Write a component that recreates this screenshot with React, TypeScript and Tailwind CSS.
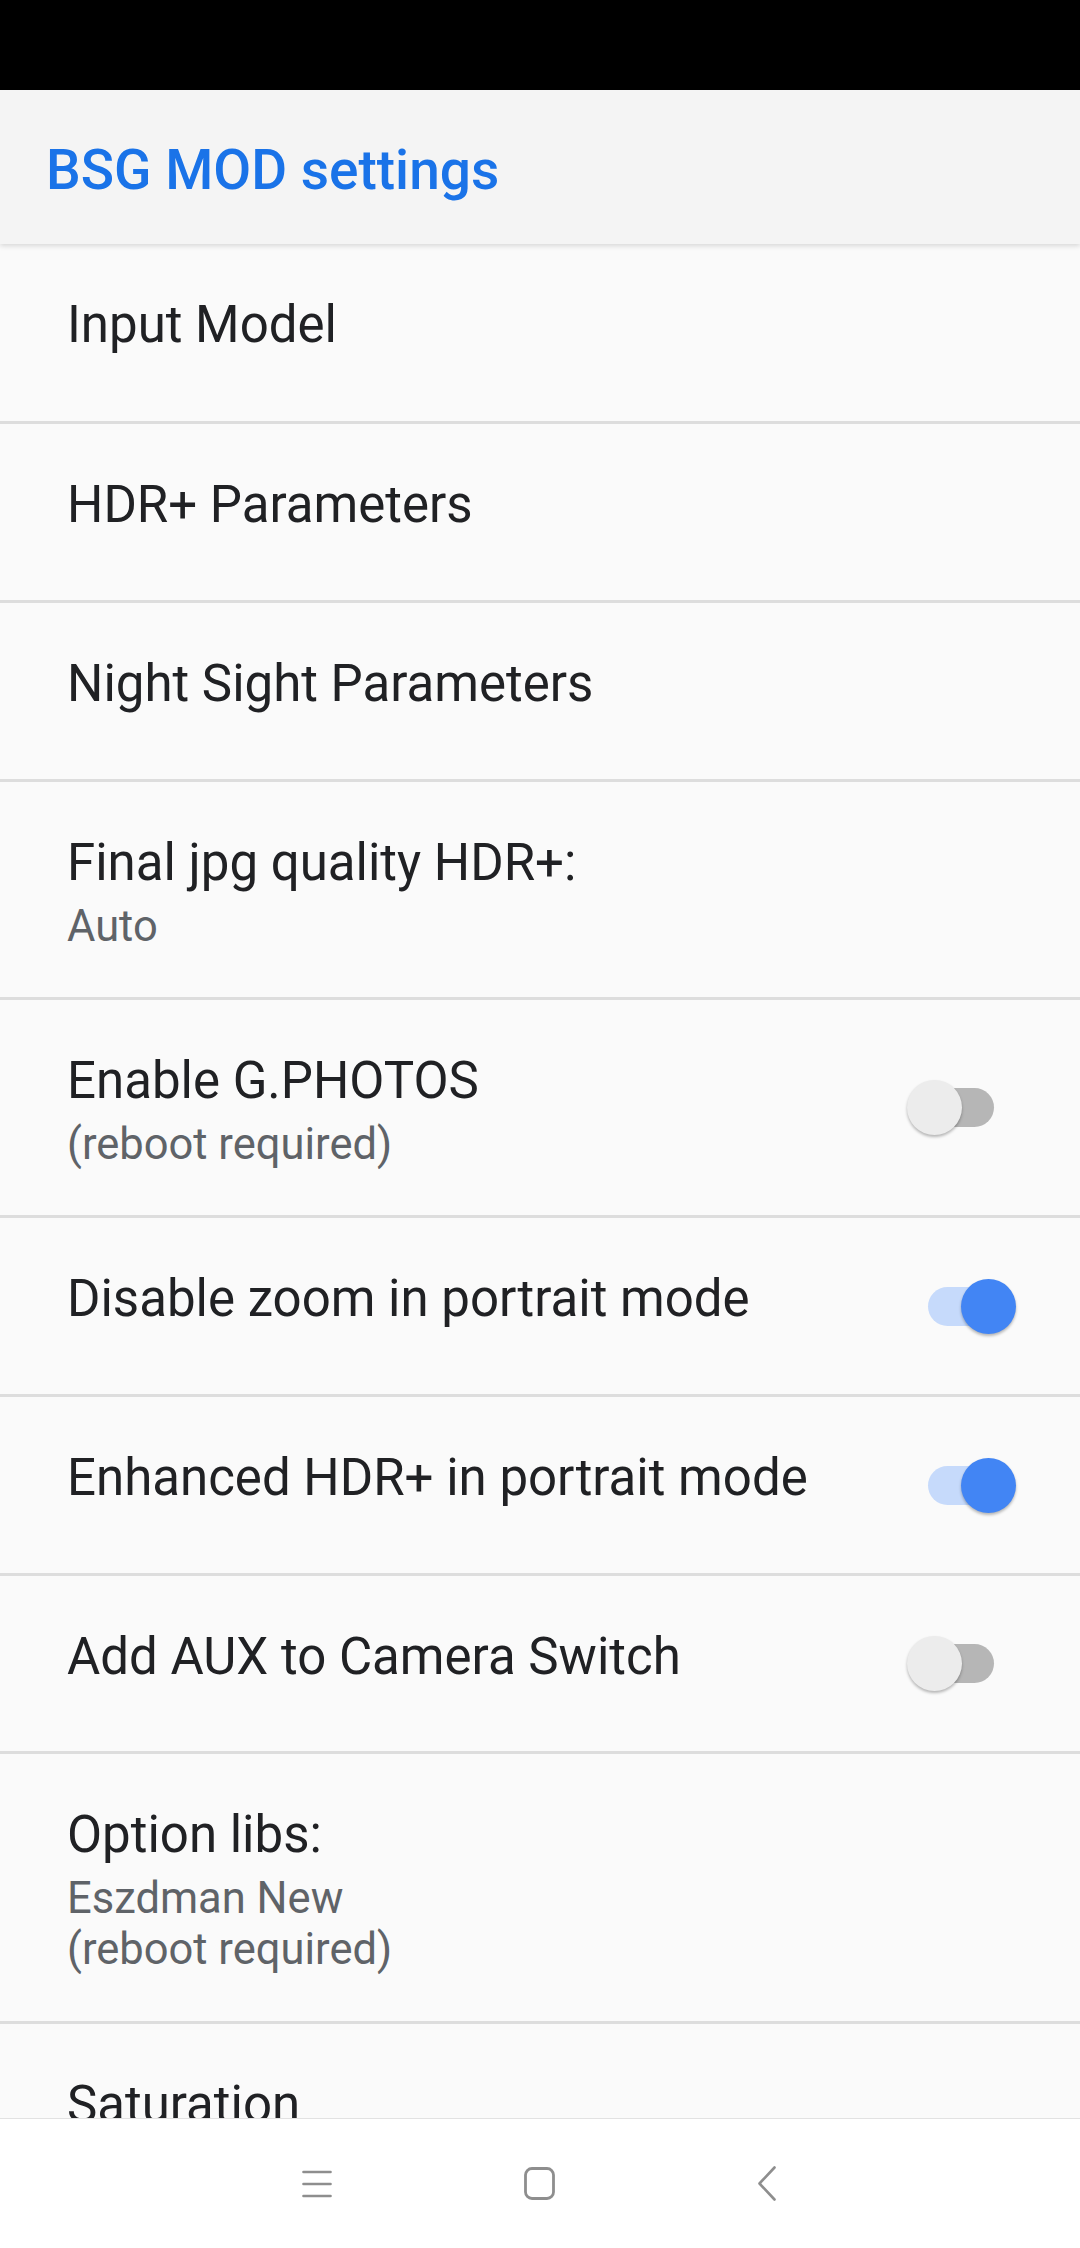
import * as React from "react"

type Row = {
  title: string
  summary?: string[]
  toggle?: boolean
  h: string
}

// heights include the 3px divider at the bottom (border-box)
const rows: Row[] = [
  { title: "Input Model", h: "h-[180px]" },
  { title: "HDR+ Parameters", h: "h-[179px]" },
  { title: "Night Sight Parameters", h: "h-[179px]" },
  { title: "Final jpg quality HDR+:", summary: ["Auto"], h: "h-[218px]" },
  { title: "Enable G.PHOTOS", summary: ["(reboot required)"], toggle: false, h: "h-[218px]" },
  { title: "Disable zoom in portrait mode", toggle: true, h: "h-[179px]" },
  { title: "Enhanced HDR+ in portrait mode", toggle: true, h: "h-[179px]" },
  { title: "Add AUX to Camera Switch", toggle: false, h: "h-[178px]" },
  { title: "Option libs:", summary: ["Eszdman New", "(reboot required)"], h: "h-[270px]" },
  { title: "Saturation", h: "h-[180px]" },
]

function Toggle({ on }: { on: boolean }) {
  return (
    <div className={`relative w-[66px] h-[39px] rounded-full ${on ? "bg-[#c6dafb]" : "bg-[#b6b6b6]"}`}>
      <div
        className={`absolute top-[-8px] w-[55px] h-[55px] rounded-full shadow-[0_2px_3px_rgba(0,0,0,0.28)] ${
          on ? "left-[33px] bg-[#4285f4]" : "left-[-21px] bg-[#ececec]"
        }`}
      />
    </div>
  )
}

function PrefRow({ row, last }: { row: Row; last: boolean }) {
  return (
    <div className={`flex shrink-0 ${row.h} ${last ? "" : "border-b-[3px] border-[#dddddd]"}`}>
      <div className="flex-1 pl-[67px] pt-[51px]">
        <div className="text-[51px] leading-[60px] text-[#202124]">{row.title}</div>
        {row.summary && (
          <div className="mt-[8px]">
            {row.summary.map((s) => (
              <div key={s} className="text-[43.5px] leading-[51px] text-[#5f6368]">
                {s}
              </div>
            ))}
          </div>
        )}
      </div>
      {row.toggle !== undefined && (
        <div className="self-center mr-[86px]">
          <Toggle on={row.toggle} />
        </div>
      )}
    </div>
  )
}

export default function App() {
  return (
    <div
      className="w-[1080px] h-[2248px] flex flex-col overflow-hidden bg-[#fafafa]"
      style={{ fontFamily: "Roboto, 'Noto Sans', sans-serif" }}
    >
      {/* status bar */}
      <div className="h-[90px] shrink-0 bg-black" />

      {/* toolbar */}
      <div className="relative z-10 h-[154px] shrink-0 bg-[#f4f4f4] pl-[46px] pt-[47px] shadow-[0_2px_5px_rgba(0,0,0,0.14)]">
        <div className="text-[55px] leading-[66px] font-medium text-[#1a73e8]">BSG MOD settings</div>
      </div>

      {/* preference list */}
      <div className="flex-1 flex flex-col overflow-hidden">
        {rows.map((r, i) => (
          <PrefRow key={r.title} row={r} last={i === rows.length - 1} />
        ))}
      </div>

      {/* navigation bar */}
      <div className="h-[130px] shrink-0 bg-white border-t border-[#e2e2e2] flex items-center pl-[302px]">
        <svg width="30" height="28" viewBox="0 0 30 28" className="text-[#8e8e8e]">
          <g stroke="currentColor" strokeWidth="2.6" strokeLinecap="round">
            <line x1="1.5" y1="2" x2="28.5" y2="2" />
            <line x1="1.5" y1="14" x2="28.5" y2="14" />
            <line x1="1.5" y1="26" x2="28.5" y2="26" />
          </g>
        </svg>
        <svg width="31" height="33" viewBox="0 0 31 33" className="ml-[192px] text-[#8e8e8e]">
          <rect x="1.5" y="1.5" width="28" height="30" rx="6.5" fill="none" stroke="currentColor" strokeWidth="2.8" />
        </svg>
        <svg width="18" height="35" viewBox="0 0 18 35" className="ml-[203px] text-[#8e8e8e]">
          <polyline
            points="16.5,1.5 1.5,17.5 16.5,33.5"
            fill="none"
            stroke="currentColor"
            strokeWidth="2.6"
            strokeLinecap="round"
            strokeLinejoin="round"
          />
        </svg>
      </div>
    </div>
  )
}
